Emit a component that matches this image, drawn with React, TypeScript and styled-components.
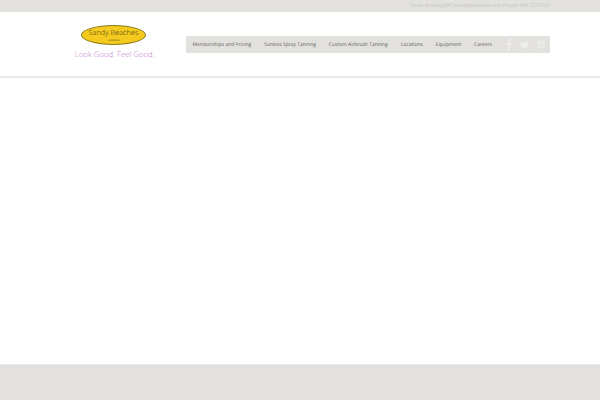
import React from "react";
import styled, { createGlobalStyle } from "styled-components";

const Global = createGlobalStyle`
  html, body { margin: 0; padding: 0; background: #fff; }
  body { font-family: "Open Sans", "Liberation Sans", sans-serif; text-rendering: geometricPrecision; }
  #root { width: 600px; height: 400px; overflow: hidden; }
`;
const Page = styled.div`
  width: 600px; height: 400px; display: flex; flex-direction: column; background: #fff;
`;
const TopBar = styled.div`
  height: 12px; background: #e2e1dd; display: flex; justify-content: flex-end; align-items: center;
  padding: 1px 50px 0 0; box-sizing: border-box;
`;
const Contact = styled.span`
  font-size: 4.9px; line-height: 11px; color: #c2c1bd; white-space: nowrap;
`;
const Header = styled.header`
  height: 66px; box-sizing: border-box; border-bottom: 2px solid #e9e9e9;
  display: flex; align-items: flex-start; padding-left: 75px;
`;
const LogoWrap = styled.div`
  width: 111px; flex: none; display: flex; flex-direction: column; padding-top: 13px;
`;
const Oval = styled.div`
  width: 65px; height: 20px; margin-left: 6px; border-radius: 50%; background: #f4ca1e; border: 0.5px solid #8a7a20;
  box-sizing: border-box; display: flex; flex-direction: column; align-items: center; justify-content: center;
`;
const Brand = styled.span`
  font-size: 7.2px; line-height: 9px; color: #3a3214; white-space: nowrap; font-weight: 300; letter-spacing: 0.1px;
`;
const Sub = styled.span`
  font-size: 2.6px; line-height: 4px; color: #4a4014; letter-spacing: 0.1px;
`;
const Tagline = styled.div`
  font-size: 7.6px; line-height: 9px; letter-spacing: 0.08px; font-weight: 300;
  margin-top: 6px; color: #c272cd; white-space: nowrap;
`;
const Nav = styled.nav`
  width: 364px; height: 17px; margin-top: 24px; background: #e2e1dd; display: flex; align-items: center;
  padding: 1px 0 0 6.5px; box-sizing: border-box; gap: 13px;
`;
const NavItem = styled.a`
  font-size: 4.96px; line-height: 16px; color: #62615c; white-space: nowrap;
`;
const Socials = styled.div`
  display: flex; align-items: center; gap: 8px; margin: -1px 5px 0 auto;
`;
const Icon = styled.svg<{ $w: number; $h: number }>`
  width: ${p => p.$w}px; height: ${p => p.$h}px; fill: #efeeeb; display: block;
`;
const Main = styled.main`flex: 1; background: #fff;`;
const Footer = styled.footer`
  height: 36px; background: #e2e1dd; border-top: 1px solid #ececec; box-sizing: border-box;
`;

export default function App() {
  return (
    <Page>
      <Global />
      <TopBar><Contact>Email: Brittany@PCertandybeaches.com Phone: 405.737.0797</Contact></TopBar>
      <Header>
        <LogoWrap>
          <Oval><Brand>Sandy Beaches</Brand><Sub>TANNING</Sub></Oval>
          <Tagline>Look Good. Feel Good.</Tagline>
        </LogoWrap>
        <Nav>
          <NavItem>Memberships and Pricing</NavItem>
          <NavItem>Sunless Spray Tanning</NavItem>
          <NavItem>Custom Airbrush Tanning</NavItem>
          <NavItem>Locations</NavItem>
          <NavItem>Equipment</NavItem>
          <NavItem>Careers</NavItem>
          <Socials>
            <Icon $w={6} $h={11} viewBox="0 0 12 24"><path d="M8 24V13h3.600l.4-4.300H8V6c0-1.200.4-2.100 2.200-2.100h2V.2C11.800.1 10.600 0 9.200 0 6 0 3.800 2 3.800 5.500v3.200H0V13h3.800v11z" /></Icon>
            <Icon $w={9} $h={8} viewBox="0 0 24 20"><path d="M24 2.600a10 10 0 0 1-2.800.8A5 5 0 0 0 23.400.7a10 10 0 0 1-3.100 1.200 4.900 4.900 0 0 0-8.400 4.500A14 14 0 0 1 1.700 1.200a4.900 4.900 0 0 0 1.500 6.600A5 5 0 0 1 1 7.200a4.900 4.900 0 0 0 3.900 4.900 5 5 0 0 1-2.200.1 4.900 4.900 0 0 0 4.600 3.400A10 10 0 0 1 0 17.600 14 14 0 0 0 21.500 5.100 10 10 0 0 0 24 2.600z" /></Icon>
            <Icon $w={8} $h={9} viewBox="0 0 24 24"><path fillRule="evenodd" d="M4 1h16a3 3 0 0 1 3 3v16a3 3 0 0 1-3 3H4a3 3 0 0 1-3-3V4a3 3 0 0 1 3-3zm13 2.500v4h3.500v-4zM3.500 10v9.500c0 .6.500 1 1 1h15c.5 0 1-.4 1-1V10h-2.700a6 6 0 1 1-11.600 0zM12 8a4 4 0 1 0 0 8 4 4 0 0 0 0-8z" /></Icon>
          </Socials>
        </Nav>
      </Header>
      <Main />
      <Footer />
    </Page>
  );
}
